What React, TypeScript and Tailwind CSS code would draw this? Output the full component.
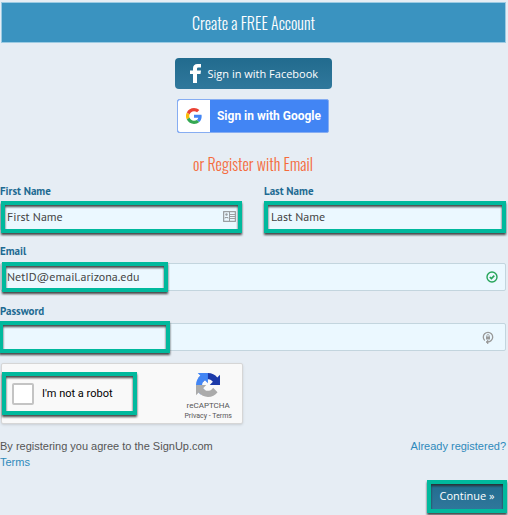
import React from "react";

const LABEL = "block h-4 text-[11px] leading-4 font-bold text-[#1d6a92] font-['PT_Sans',Lato,sans-serif]";
const FIELD =
  "block h-7 w-full rounded-xs border border-[#c3d5de] bg-[#ebf8ff] pl-1.5 pb-0.5 text-xs text-[#444] outline-none font-['PT_Sans',Lato,sans-serif]";
const FRAME =
  "pointer-events-none absolute border-4 border-[#00b99d] drop-shadow-[0_2px_1px_rgba(40,40,40,0.85)]";
const NARROW = "font-light font-['Oswald','Liberation_Sans_Narrow',sans-serif]";

function GoogleLogo() {
  return (
    <svg viewBox="0 0 48 48" className="size-4" aria-hidden="true">
      <path fill="#EA4335" d="M24 9.5c3.5 0 6.700 1.200 9.200 3.600l6.900-6.900C35.900 2.400 30.500 0 24 0 14.600 0 6.500 5.400 2.600 13.200l8 6.200C12.400 13.700 17.700 9.500 24 9.500z" />
      <path fill="#4285F4" d="M47 24.600c0-1.600-.2-3.100-.4-4.600H24v9h12.900c-.6 3-2.300 5.500-4.800 7.200l7.700 6C44.400 38 47 31.800 47 24.600z" />
      <path fill="#FBBC05" d="M10.500 28.600a14.500 14.500 0 0 1 0-9.200l-8-6.200a24 24 0 0 0 0 21.600l8-6.200z" />
      <path fill="#34A853" d="M24 48c6.500 0 11.900-2.100 15.900-5.800l-7.700-6c-2.200 1.500-4.900 2.300-8.200 2.300-6.300 0-11.600-4.200-13.500-9.900l-8 6.200C6.500 42.600 14.600 48 24 48z" />
    </svg>
  );
}

function RecaptchaLogo() {
  return (
    <svg viewBox="0 0 64 64" className="size-6" aria-hidden="true">
      <path fill="#1c3aa9" d="M64 31.955l-.033-1.370V4.687l-7.160 7.160C50.948 4.674 42.033.093 32.050.093c-10.400 0-19.622 4.960-25.458 12.640l11.736 11.860a15.550 15.550 0 0 1 4.754-5.334c2.050-1.600 4.952-2.906 8.968-2.906.485 0 .860.057 1.135.163 4.976.393 9.288 3.140 11.828 7.124l-8.307 8.307L64 31.953" />
      <path fill="#4285f4" d="M31.862.094l-1.370.033H4.594l7.160 7.160C4.580 13.147 0 22.060 0 32.046c0 10.400 4.960 19.622 12.640 25.458L24.500 45.768a15.550 15.550 0 0 1-5.334-4.754c-1.600-2.050-2.906-4.952-2.906-8.968 0-.485.057-.860.163-1.135.393-4.976 3.140-9.288 7.124-11.828l8.307 8.307L31.860.095" />
      <path fill="#ababab" d="M.001 32.045l.033 1.370v25.898l7.160-7.160c5.860 7.173 14.774 11.754 24.760 11.754 10.400 0 19.622-4.960 25.458-12.640l-11.736-11.860a15.550 15.550 0 0 1-4.754 5.334c-2.050 1.600-4.952 2.906-8.968 2.906-.485 0-.860-.057-1.135-.163-4.976-.393-9.288-3.140-11.828-7.124l8.307-8.307L0 32.046" />
    </svg>
  );
}

function ContactCardIcon() {
  return (
    <svg viewBox="0 0 13 11" className="h-[11px] w-[13px]" fill="none" stroke="#9b9fa2" aria-hidden="true">
      <rect x="0.500" y="0.500" width="12" height="10" rx="1" strokeWidth="1.500" />
      <path d="M6.500 1v9M7 3.500h5M7 5.500h5M7 7.500h5" />
      <circle cx="3.500" cy="3.500" r="1.200" fill="#9b9fa2" stroke="none" />
      <path d="M2 7.500V6.500h3v1" />
    </svg>
  );
}

function CheckIcon() {
  return (
    <svg viewBox="0 0 12 12" className="size-3" fill="none" stroke="#27a55a" aria-hidden="true">
      <circle cx="6" cy="6" r="5" strokeWidth="1.400" />
      <path d="M3.800 6l1.600 1.600 2.900-3" strokeWidth="1.700" />
    </svg>
  );
}

function LockIcon() {
  return (
    <svg viewBox="0 0 12 14" className="h-3.5 w-3" fill="none" stroke="#999" aria-hidden="true">
      <path d="M2.800 9.500a4.700 4.700 0 1 1 6.400 0Q8 11 5 11" strokeWidth="1.300" />
      <path d="M6 9L4 11l2 2z" fill="#999" strokeWidth="0.600" />
      <rect x="4" y="5.500" width="4" height="3" fill="#999" stroke="none" />
      <path d="M4.800 6V4.700a1.200 1.200 0 0 1 2.400 0V6" strokeWidth="0.800" />
    </svg>
  );
}

export default function App() {
  return (
    <main className="min-h-screen bg-[#e6edf4] pt-0.5 pr-0.5 pb-1 font-['Liberation_Sans',Arial,sans-serif]">
      <h1
        className={`ml-px border border-[#9ccbe3] bg-[#3a93c0] pt-px text-center text-base leading-[38px] text-white ${NARROW}`}
      >
        Create a FREE Account
      </h1>

      <form onSubmit={(e) => e.preventDefault()}>
        <div className="mt-[15px] flex flex-col items-center gap-2.5">
          <button
            type="button"
            className="flex h-[31px] w-[157px] items-center rounded-sm bg-linear-to-b from-[#216b8e] to-[#30789c] pl-[15px] text-[11px] text-white font-['Open_Sans',sans-serif]"
          >
            <svg viewBox="0 0 11 19" className="mr-[7px] h-[19px] w-[11px] shrink-0" fill="#fff" aria-hidden="true">
              <path d="M3 19V10H0V6.500h3V4.500C3 1.500 4.500 0 7.500 0H11v3.500H8.500C7.300 3.500 7 4 7 5v1.500h4L10.500 10H7v9z" />
            </svg>
            <span className="pt-0.5 whitespace-nowrap">Sign in with Facebook</span>
          </button>
          <button
            type="button"
            className="flex h-[34px] w-[152px] items-center rounded-xs border border-[#86adf2] bg-[#4285f4] text-xs font-bold text-white font-['Roboto',sans-serif]"
          >
            <span className="flex h-full w-8 shrink-0 items-center justify-center rounded-l-xs bg-white">
              <GoogleLogo />
            </span>
            <span className="flex-1 text-center whitespace-nowrap">Sign in with Google</span>
          </button>
        </div>

        <h2 className={`mt-[19px] text-center text-base leading-6 text-[#f56b3c] ${NARROW}`}>
          or Register with Email
        </h2>

        <div className="mt-[7px] grid grid-cols-2 gap-[22px]">
          <div>
            <label htmlFor="first" className={LABEL}>First Name</label>
            <div className="relative mt-1">
              <input id="first" defaultValue="First Name" className={FIELD} />
              <span className="absolute top-2 right-1.5"><ContactCardIcon /></span>
              <span className={`${FRAME} -inset-y-0.5 left-px right-0`} />
            </div>
          </div>
          <div>
            <label htmlFor="last" className={LABEL}>Last Name</label>
            <div className="relative mt-1">
              <input id="last" defaultValue="Last Name" className={FIELD} />
              <span className={`${FRAME} -inset-y-0.5 inset-x-0`} />
            </div>
          </div>
        </div>

        <label htmlFor="email" className={`mt-3 ${LABEL}`}>Email</label>
        <div className="relative mt-1">
          <input id="email" type="email" defaultValue="NetID@email.arizona.edu" className={FIELD} />
          <span className="absolute top-2 right-2"><CheckIcon /></span>
          <span className={`${FRAME} -inset-y-px left-0.5 w-[166px]`} />
        </div>

        <label htmlFor="password" className={`mt-3 ${LABEL}`}>Password</label>
        <div className="relative mt-1">
          <input id="password" type="password" className={FIELD} />
          <span className="absolute top-2 right-3"><LockIcon /></span>
          <span className={`${FRAME} -inset-y-0.5 -left-px w-[171px]`} />
        </div>

        <div className="relative mt-3 ml-px flex h-[61px] w-[242px] items-center justify-between rounded-xs border border-[#d6d6d6] bg-[#f9f9f9] pr-2.5 pl-2.5 shadow-sm font-['Roboto',sans-serif]">
          <div className="flex items-center gap-2">
            <input
              id="robot"
              type="checkbox"
              className="size-[22px] appearance-none rounded-xs border-2 border-[#c4c4c4] bg-white"
            />
            <label htmlFor="robot" className="pt-0.5 text-[11px] text-black">I'm not a robot</label>
          </div>
          <div className="flex flex-col items-center pt-1.5 text-[#555]">
            <RecaptchaLogo />
            <span className="mt-1 text-[8px] leading-[10px]">reCAPTCHA</span>
            <span className="text-[7px] leading-[10px] whitespace-nowrap">
              <a href="#privacy">Privacy</a> - <a href="#terms">Terms</a>
            </span>
          </div>
          <span className={`${FRAME} inset-y-2 left-0 w-[135px]`} />
        </div>

        <div className="mt-3.5 flex items-start justify-between text-[11px] leading-4">
          <p className="w-[230px] text-[#555]">
            By registering you agree to the SignUp.com{" "}
            <a href="#site-terms" className="text-[#2f8abb]">Terms</a>
          </p>
          <a href="#login" className="text-[#2f8abb]">Already registered?</a>
        </div>

        <div className="mt-3 flex justify-end">
          <div className="relative">
            <button
              type="submit"
              className="block h-[29px] w-[78px] bg-linear-to-b from-[#216b8e] to-[#30789c] text-[11px] text-white font-['Open_Sans',sans-serif]"
            >
              Continue »
            </button>
            <span className={`${FRAME} -inset-y-0.5 -inset-x-px`} />
          </div>
        </div>
      </form>
    </main>
  );
}
